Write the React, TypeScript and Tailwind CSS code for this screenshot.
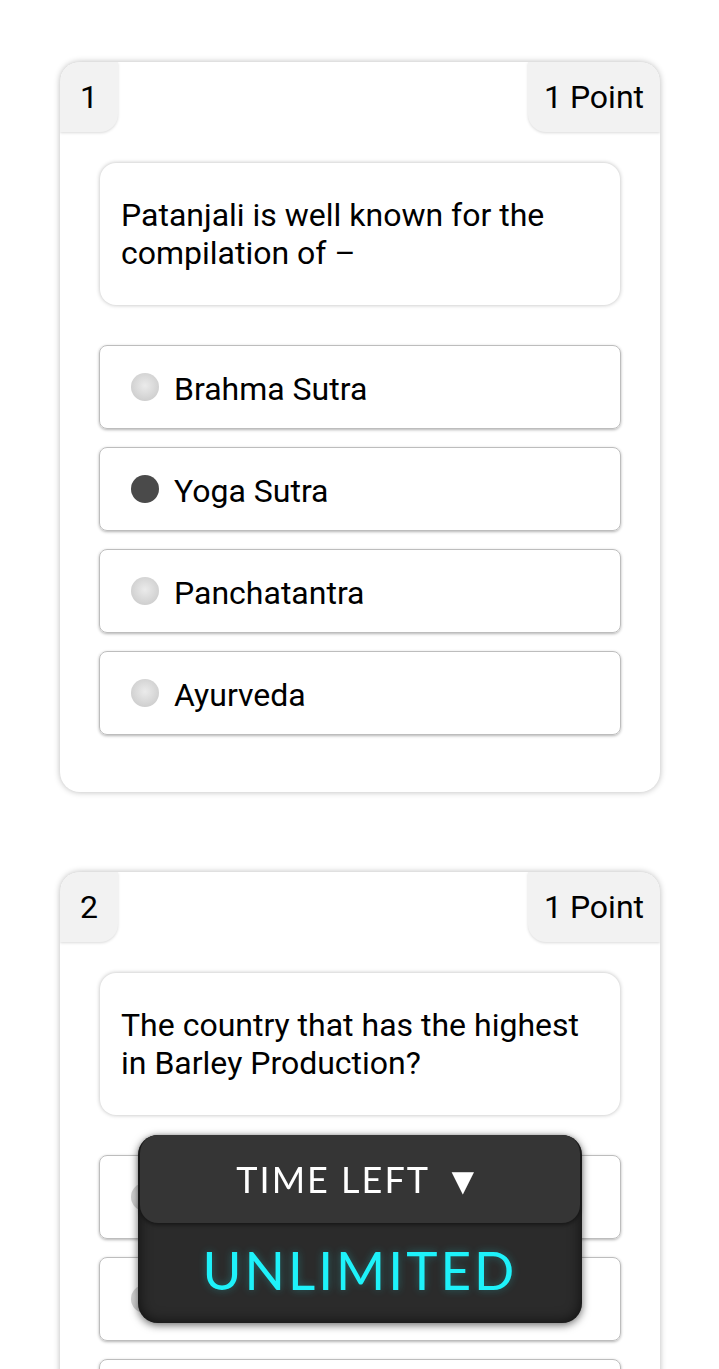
import React from 'react';

interface Question {
  num: number;
  text: string;
  options: string[];
  selected?: number;
}

const questions: Question[] = [
  {
    num: 1,
    text: 'Patanjali is well known for the compilation of –',
    options: ['Brahma Sutra', 'Yoga Sutra', 'Panchatantra', 'Ayurveda'],
    selected: 1,
  },
  {
    num: 2,
    text: 'The country that has the highest in Barley Production?',
    options: ['China', 'India', 'Russia', 'France'],
  },
];

function Radio({ checked }: { checked: boolean }) {
  if (checked) {
    return <span className="w-[28px] h-[28px] rounded-full bg-[#4a4a4a] shrink-0" />;
  }
  return (
    <span className="w-[28px] h-[28px] rounded-full shrink-0 bg-[radial-gradient(circle_at_50%_45%,#ebebeb_0%,#d4d4d4_60%,#c4c4c4_100%)]" />
  );
}

function QuestionCard({ q }: { q: Question }) {
  return (
    <div className="w-[600px] bg-white rounded-[20px] shadow-[0_0_6px_rgba(0,0,0,0.28)] overflow-hidden pb-[57px]">
      {/* header tabs */}
      <div className="flex justify-between h-[70px]">
        <div className="w-[58px] bg-[#f2f2f2] rounded-br-[18px] shadow-[0_1px_3px_rgba(0,0,0,0.15)] flex items-center justify-center">
          {q.num}
        </div>
        <div className="w-[132px] bg-[#f2f2f2] rounded-bl-[18px] shadow-[0_1px_3px_rgba(0,0,0,0.15)] flex items-center justify-center">
          1 Point
        </div>
      </div>

      {/* question */}
      <div className="mx-[40px] mt-[31px] rounded-[16px] shadow-[0_0_4px_rgba(0,0,0,0.28)] px-[21px] py-[33px] leading-[38px]">
        {q.text}
      </div>

      {/* options */}
      <div className="mx-[39px] mt-[40px] flex flex-col gap-[18px]">
        {q.options.map((opt, i) => (
          <div
            key={opt}
            className="h-[84px] rounded-[8px] border border-[#bdbdbd] shadow-[0_1px_3px_rgba(0,0,0,0.3)] flex items-center pl-[31px] gap-[15px]"
          >
            <Radio checked={q.selected === i} />
            <span className="pt-[3px]">{opt}</span>
          </div>
        ))}
      </div>
    </div>
  );
}

export default function App() {
  return (
    <div className="min-h-screen bg-white text-black text-[32px] font-['Roboto',sans-serif]">
      <div className="flex flex-col items-center gap-[80px] pt-[62px] pb-[40px] pl-px">
        {questions.map((q) => (
          <QuestionCard key={q.num} q={q} />
        ))}
      </div>

      {/* Timer overlay */}
      <div className="fixed bottom-[46px] left-[138px] w-[444px] h-[188px] rounded-[20px] bg-[#2b2b2b] shadow-[0_2px_8px_rgba(0,0,0,0.6),inset_0_0_14px_rgba(0,0,0,0.7)] flex flex-col font-['Lato',sans-serif]">
        <div className="mx-[2px] h-[88px] rounded-[18px] bg-[#353535] shadow-[0_2px_4px_rgba(0,0,0,0.5)] flex items-center justify-center text-white text-[36px] tracking-[2px] font-normal">
          TIME LEFT<span className="ml-[14px] text-[38px] leading-none">▼</span>
        </div>
        <div className="flex-1 flex items-center justify-center pb-[6px] text-[#1ef2fa] text-[53px] tracking-[3px] font-normal [text-shadow:0_0_8px_rgba(30,242,250,0.3)]">
          UNLIMITED
        </div>
      </div>
    </div>
  );
}
